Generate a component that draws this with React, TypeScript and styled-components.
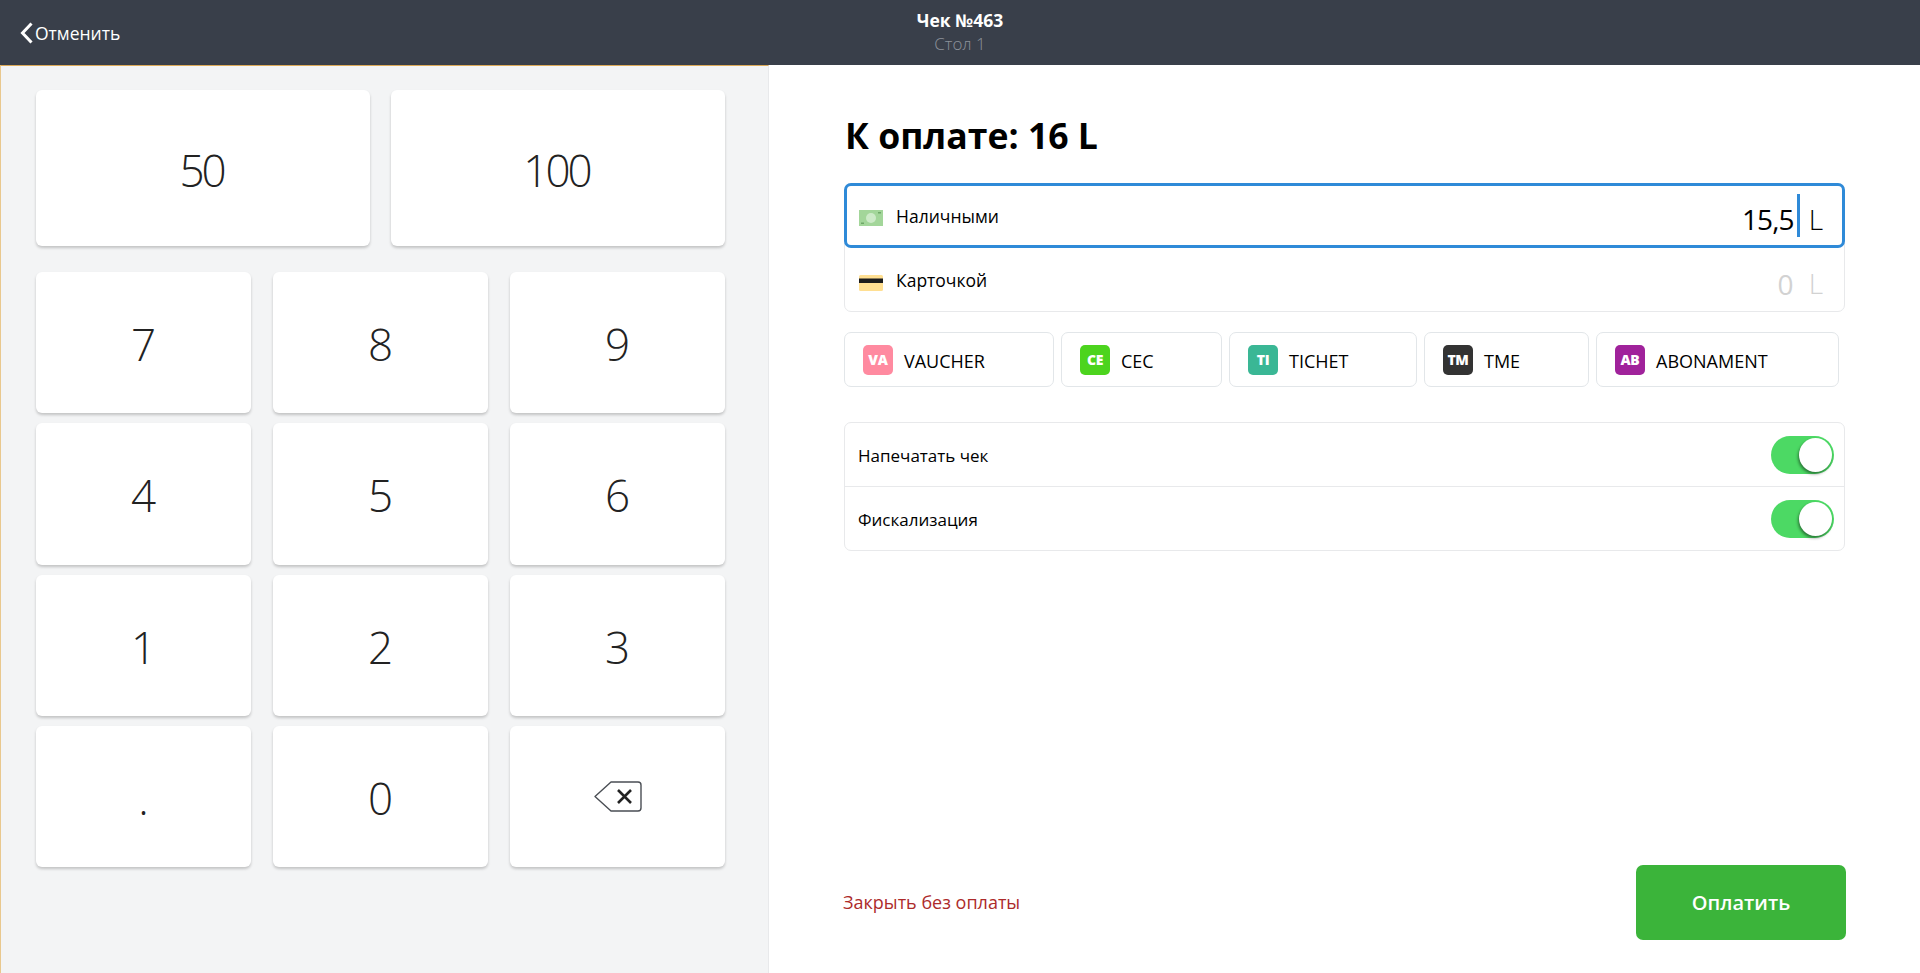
import React from 'react';
import styled, { createGlobalStyle } from 'styled-components';

const GlobalStyle = createGlobalStyle`
  html, body {
    margin: 0;
    padding: 0;
    height: 100%;
    background: #fff;
    font-family: "Open Sans", "Noto Sans", sans-serif;
  }
  #root { height: 100%; }
  * { box-sizing: border-box; }
`;

const Page = styled.div`
  height: 973px;
  display: flex;
  flex-direction: column;
  overflow: hidden;
`;

const Header = styled.header`
  height: 65px;
  flex: none;
  background: #393f4a;
  display: grid;
  grid-template-columns: 1fr auto 1fr;
  align-items: center;
  color: #fff;
`;

const BackLink = styled.a`
  display: flex;
  align-items: center;
  gap: 2px;
  padding-left: 20px;
  font-size: 17.5px;
  color: #fff;
`;

const HeaderTitle = styled.div`
  text-align: center;
`;

const CheckName = styled.div`
  font-size: 17.5px;
  font-weight: 700;
  line-height: 22px;
`;

const TableName = styled.div`
  font-size: 17px;
  font-weight: 300;
  line-height: 26px;
  color: #8d929b;
`;

const Body = styled.div`
  flex: 1;
  display: flex;
  min-height: 0;
`;

const PadPanel = styled.section`
  width: 769px;
  flex: none;
  background: #f3f4f5;
  border-top: 1px solid #dca957;
  border-left: 1px solid #e9c88e;
  border-right: 1px solid #e8e9eb;
  padding: 24px 43px 0 35px;
`;

const QuickRow = styled.div`
  display: grid;
  grid-template-columns: repeat(2, 1fr);
  gap: 21px;
  margin-bottom: 26px;
`;

const KeyGrid = styled.div`
  display: grid;
  grid-template-columns: repeat(3, 1fr);
  grid-auto-rows: 141.3px;
  column-gap: 22px;
  row-gap: 10px;
`;

const Key = styled.button<{ $tall?: boolean }>`
  height: ${p => (p.$tall ? '156px' : 'auto')};
  border: 0;
  border-radius: 6px;
  background: #fff;
  box-shadow: 0 2px 3px rgba(0, 0, 0, 0.2);
  display: flex;
  align-items: center;
  justify-content: center;
  padding: 3px 3px 0 0;
  font-family: inherit;
  font-size: 44px;
  font-weight: 300;
  letter-spacing: -3px;
  color: #222;
`;

const EraseIcon = styled.svg`
  width: 48px;
  height: 31px;
  margin: -3px -3px 0 0;
`;

const PayPanel = styled.section`
  flex: 1;
  display: flex;
  flex-direction: column;
  padding: 45px 75px 33px 75px;
`;

const Amount = styled.h1`
  margin: 0 0 23px 1px;
  font-size: 35.6px;
  line-height: 50px;
  font-weight: 700;
  color: #000;
`;

const MethodList = styled.div`
  border: 1px solid #e8e9eb;
  border-radius: 7px;
  height: 129px;
`;

const Method = styled.div<{ $active?: boolean }>`
  height: ${p => (p.$active ? '65px' : '64px')};
  margin: ${p => (p.$active ? '-1px -1px 0' : '0')};
  display: flex;
  align-items: center;
  padding: 0 ${p => (p.$active ? '19px' : '21px')} 0 ${p => (p.$active ? '12px' : '14px')};
  border: ${p => (p.$active ? '3px solid #2f8ad8' : '0')};
  border-radius: 7px;
`;

const MethodIcon = styled.svg`
  width: 24px;
  height: 16px;
  flex: none;
  margin: 5px 13px 0 0;
`;

const MethodName = styled.span`
  flex: 1;
  font-size: 17.5px;
  color: #000;
`;

const MethodValue = styled.span<{ $muted?: boolean }>`
  margin-top: 7px;
  font-size: 28px;
  font-weight: 500;
  line-height: 40px;
  letter-spacing: -0.9px;
  color: ${p => (p.$muted ? '#d2d2d2' : '#000')};
`;

const Caret = styled.span`
  width: 3px;
  height: 43px;
  margin: 0 9px 0 3px;
  background: #2f8ad8;
`;

const Currency = styled.span<{ $muted?: boolean }>`
  margin-top: 6px;
  margin-left: ${p => (p.$muted ? '16px' : '0')};
  font-size: 28px;
  line-height: 40px;
  font-weight: 300;
  color: ${p => (p.$muted ? '#d2d2d2' : '#000')};
`;

const TenderRow = styled.div`
  display: flex;
  gap: 7px;
  margin-top: 20px;
`;

const Tender = styled.div<{ $w: number }>`
  width: ${p => p.$w}px;
  height: 55px;
  border: 1px solid #e2e6e9;
  border-radius: 7px;
  display: flex;
  align-items: center;
  gap: 11px;
  padding-left: 18px;
  font-size: 18px;
  color: #000;
`;

const TenderName = styled.span`
  margin-top: 2px;
`;

const Badge = styled.span<{ $color: string }>`
  width: 30px;
  height: 30px;
  border-radius: 5px;
  background: ${p => p.$color};
  color: #fff;
  font-size: 14px;
  font-weight: 800;
  letter-spacing: -0.3px;
  display: flex;
  align-items: center;
  justify-content: center;
`;

const OptionList = styled.div`
  margin-top: 35px;
  border: 1px solid #e8e9eb;
  border-radius: 7px;
  height: 129px;
`;

const Option = styled.div`
  height: 63px;
  display: flex;
  align-items: center;
  justify-content: space-between;
  padding: 0 10px 0 13px;
  font-size: 17px;
  color: #000;

  & + & {
    height: 64px;
    border-top: 1px solid #e8e9eb;
  }
`;

const OptionName = styled.span`
  margin-top: 2px;
`;

const Toggle = styled.span`
  width: 63px;
  height: 38px;
  border-radius: 19px;
  background: #4cd964;
  display: flex;
  align-items: center;
  justify-content: flex-end;
  padding-right: 2px;
`;

const Knob = styled.span`
  width: 33px;
  height: 34px;
  border-radius: 50%;
  background: #fff;
  box-shadow: -1px 2px 3px rgba(0, 0, 0, 0.45);
`;

const Footer = styled.div`
  margin-top: auto;
  display: flex;
  align-items: center;
  justify-content: space-between;
`;

const CloseLink = styled.a`
  margin: -2px 0 0 -1px;
  font-size: 18px;
  font-weight: 500;
  color: #ad2b2b;
`;

const PayButton = styled.button`
  width: 210px;
  height: 75px;
  margin-right: -1px;
  border: 0;
  border-radius: 7px;
  background: #3bb43a;
  color: #fff;
  font-family: inherit;
  font-size: 20px;
  font-weight: 600;
`;

const tenders = [
  { code: 'VA', name: 'VAUCHER', color: '#ff8aa0', w: 210 },
  { code: 'CE', name: 'CEC', color: '#4cd41e', w: 161 },
  { code: 'TI', name: 'TICHET', color: '#3ab795', w: 188 },
  { code: 'TM', name: 'TME', color: '#333333', w: 165 },
  { code: 'AB', name: 'ABONAMENT', color: '#a0229b', w: 243 },
];

const keys = ['7', '8', '9', '4', '5', '6', '1', '2', '3', '.', '0'];

const App = () => (
  <Page>
    <GlobalStyle />
    <Header>
      <BackLink>
        <svg width="13" height="22" viewBox="0 0 13 22" fill="none">
          <path d="M11.5 1.5 2.5 11l9 9.5" stroke="#fff" strokeWidth="3" />
        </svg>
        Отменить
      </BackLink>
      <HeaderTitle>
        <CheckName>Чек №463</CheckName>
        <TableName>Стол 1</TableName>
      </HeaderTitle>
    </Header>
    <Body>
      <PadPanel>
        <QuickRow>
          <Key $tall>50</Key>
          <Key $tall>100</Key>
        </QuickRow>
        <KeyGrid>
          {keys.map(k => (
            <Key key={k}>{k}</Key>
          ))}
          <Key aria-label="Удалить">
            <EraseIcon viewBox="0 0 48 31" fill="none">
              <path
                d="M17 1h27a3 3 0 0 1 3 3v23a3 3 0 0 1-3 3H17L1 15.5 17 1Z"
                stroke="#4a4e54"
                strokeWidth="1.4"
                strokeLinejoin="round"
              />
              <path d="M24 9l13 13M37 9 24 22" stroke="#222" strokeWidth="2.6" />
            </EraseIcon>
          </Key>
        </KeyGrid>
      </PadPanel>
      <PayPanel>
        <Amount>К оплате: 16 L</Amount>
        <MethodList>
          <Method $active>
            <MethodIcon viewBox="0 0 24 16">
              <rect width="24" height="16" fill="#a3d69a" />
              <circle cx="12" cy="8" r="5" fill="#cdeac8" />
              <rect x="19" y="2" width="3" height="1.5" fill="#6fa868" />
              <rect x="2" y="12.5" width="3" height="1.5" fill="#6fa868" />
            </MethodIcon>
            <MethodName>Наличными</MethodName>
            <MethodValue>15,5</MethodValue>
            <Caret />
            <Currency>L</Currency>
          </Method>
          <Method>
            <MethodIcon viewBox="0 0 24 16">
              <rect width="24" height="16" rx="1.5" fill="#ffdf92" />
              <rect y="3.5" width="24" height="4.5" fill="#1c1c1c" />
            </MethodIcon>
            <MethodName>Карточкой</MethodName>
            <MethodValue $muted>0</MethodValue>
            <Currency $muted>L</Currency>
          </Method>
        </MethodList>
        <TenderRow>
          {tenders.map(t => (
            <Tender key={t.code} $w={t.w}>
              <Badge $color={t.color}>{t.code}</Badge>
              <TenderName>{t.name}</TenderName>
            </Tender>
          ))}
        </TenderRow>
        <OptionList>
          <Option>
            <OptionName>Напечатать чек</OptionName>
            <Toggle>
              <Knob />
            </Toggle>
          </Option>
          <Option>
            <OptionName>Фискализация</OptionName>
            <Toggle>
              <Knob />
            </Toggle>
          </Option>
        </OptionList>
        <Footer>
          <CloseLink>Закрыть без оплаты</CloseLink>
          <PayButton>Оплатить</PayButton>
        </Footer>
      </PayPanel>
    </Body>
  </Page>
);

export default App;
